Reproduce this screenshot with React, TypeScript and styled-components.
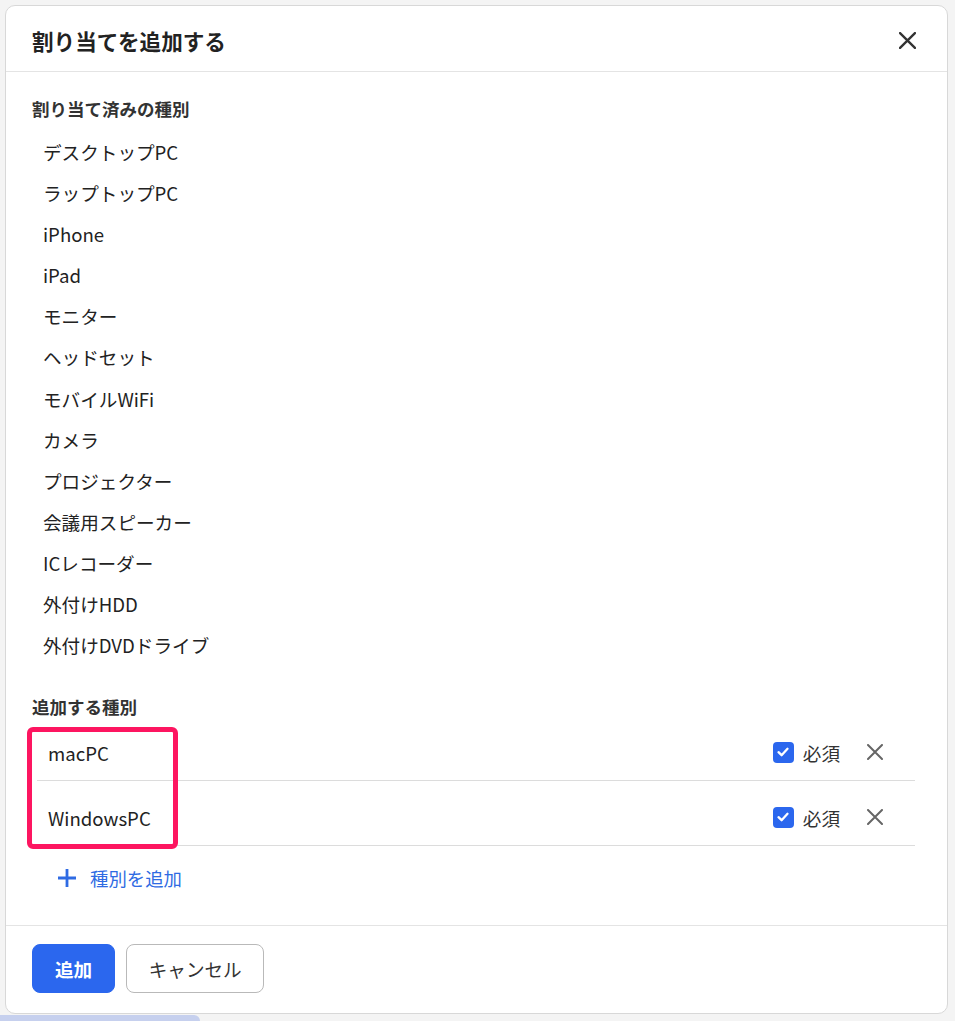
import styled, { createGlobalStyle } from "styled-components";

const GlobalStyle = createGlobalStyle`
  body {
    margin: 0;
    background: #f4f4f4;
    font-family: "Noto Sans CJK JP", "Noto Sans", sans-serif;
    color: #222;
  }
`;

// ページ全体
const Page = styled.div`
  padding: 5px 7px 0 5px;
  height: 1021px;
  box-sizing: border-box;
  overflow: hidden;
`;

const Modal = styled.div`
  background: #fff;
  border: 1px solid #d8d8d8;
  border-radius: 10px;
  display: flex;
  flex-direction: column;
`;

const Header = styled.header`
  height: 66px;
  box-sizing: border-box;
  padding: 3px 28px 0 26px;
  display: flex;
  align-items: center;
  justify-content: space-between;
  border-bottom: 1px solid #e4e4e4;
`;

const Title = styled.h1`
  margin: 0;
  font-size: 21.6px;
  font-weight: bold;
  color: #222;
`;

const IconButton = styled.button`
  border: none;
  background: none;
  padding: 0;
  width: 24px;
  height: 24px;
  display: flex;
  align-items: center;
  justify-content: center;
  cursor: pointer;
`;

const Body = styled.div`
  padding: 27px 32px 27px 26px;
`;

const SectionLabel = styled.div`
  font-size: 17.5px;
  line-height: 20px;
  font-weight: bold;
  color: #333;
`;

const TypeList = styled.ul`
  list-style: none;
  margin: 12px 0 32px;
  padding: 0 0 0 11px;
`;

const TypeItem = styled.li`
  font-size: 18.6px;
  line-height: 41.1px;
  color: #222;
`;

const Rows = styled.div`
  position: relative;
  margin: -1px 0 0 5px;
`;

const Row = styled.div`
  height: 65px;
  box-sizing: border-box;
  padding: 8px 28px 0 11px;
  display: flex;
  align-items: center;
  border-bottom: 1px solid #dcdcdc;
`;

const RowName = styled.span`
  flex: 1;
  font-size: 18.6px;
  color: #222;
`;

const Required = styled.label`
  display: flex;
  align-items: center;
  gap: 9px;
  font-size: 18.6px;
  color: #333;
  margin-right: 23px;
`;

const CheckBox = styled.span`
  width: 21px;
  height: 21px;
  border-radius: 4px;
  background: #2b67ee;
  display: flex;
  align-items: center;
  justify-content: center;
`;

// 注釈の枠（スクリーンショット上のハイライト）
const Highlight = styled.div`
  position: absolute;
  left: -10px;
  top: 11px;
  width: 151px;
  height: 122px;
  box-sizing: border-box;
  border: 5px solid #fd1560;
  border-radius: 6px;
  pointer-events: none;
`;

const AddLink = styled.button`
  margin: 12px 0 0 25px;
  height: 40px;
  padding: 0;
  border: none;
  background: none;
  display: flex;
  align-items: center;
  gap: 13px;
  font-family: inherit;
  font-size: 18.4px;
  color: #2f6be3;
  cursor: pointer;
`;

const Footer = styled.footer`
  border-top: 1px solid #e4e4e4;
  padding: 18px 26px 20px;
  display: flex;
  gap: 11px;
`;

const Button = styled.button<{ $primary?: boolean }>`
  height: 49px;
  padding: 0 ${(p) => (p.$primary ? "22px" : "21.5px")};
  border-radius: 8px;
  font-family: inherit;
  font-size: 18.6px;
  font-weight: ${(p) => (p.$primary ? "bold" : "normal")};
  color: ${(p) => (p.$primary ? "#fff" : "#333")};
  background: ${(p) => (p.$primary ? "#2b67ee" : "#fff")};
  border: 1px solid ${(p) => (p.$primary ? "#2b67ee" : "#b9b9b9")};
  cursor: pointer;
`;

const BackStrip = styled.div`
  margin: 1px 0 0 -5px;
  width: 200px;
  height: 8px;
  background: #c6d0ee;
  border-top-right-radius: 6px;
`;

const CloseIcon = ({ size, color, width }: { size: number; color: string; width: number }) => (
  <svg width={size} height={size} viewBox="0 0 16 16" fill="none">
    <path d="M1 1L15 15M15 1L1 15" stroke={color} strokeWidth={width} strokeLinecap="round" />
  </svg>
);

const assigned = [
  "デスクトップPC",
  "ラップトップPC",
  "iPhone",
  "iPad",
  "モニター",
  "ヘッドセット",
  "モバイルWiFi",
  "カメラ",
  "プロジェクター",
  "会議用スピーカー",
  "ICレコーダー",
  "外付けHDD",
  "外付けDVDドライブ",
];

const adding = ["macPC", "WindowsPC"];

const App: React.FC = () => {
  return (
    <Page>
      <GlobalStyle />
      <Modal>
        <Header>
          <Title>割り当てを追加する</Title>
          <IconButton aria-label="閉じる">
            <CloseIcon size={17} color="#333" width={2.2} />
          </IconButton>
        </Header>
        <Body>
          <SectionLabel>割り当て済みの種別</SectionLabel>
          <TypeList>
            {assigned.map((t) => (
              <TypeItem key={t}>{t}</TypeItem>
            ))}
          </TypeList>
          <SectionLabel>追加する種別</SectionLabel>
          <Rows>
            {adding.map((t) => (
              <Row key={t}>
                <RowName>{t}</RowName>
                <Required>
                  <CheckBox>
                    <svg width="14" height="14" viewBox="0 0 14 14" fill="none">
                      <path d="M2.5 7.2L5.6 10.2L11.5 3.8" stroke="#fff" strokeWidth="2.3" strokeLinecap="round" strokeLinejoin="round" />
                    </svg>
                  </CheckBox>
                  必須
                </Required>
                <IconButton aria-label="削除">
                  <CloseIcon size={16} color="#666" width={2} />
                </IconButton>
              </Row>
            ))}
            <Highlight />
          </Rows>
          <AddLink>
            <svg width="20" height="20" viewBox="0 0 20 20" fill="none">
              <path d="M10 1V19M1 10H19" stroke="#2f6be3" strokeWidth="2.8" />
            </svg>
            種別を追加
          </AddLink>
        </Body>
        <Footer>
          <Button $primary>追加</Button>
          <Button>キャンセル</Button>
        </Footer>
      </Modal>
      <BackStrip />
    </Page>
  );
};

export default App;
